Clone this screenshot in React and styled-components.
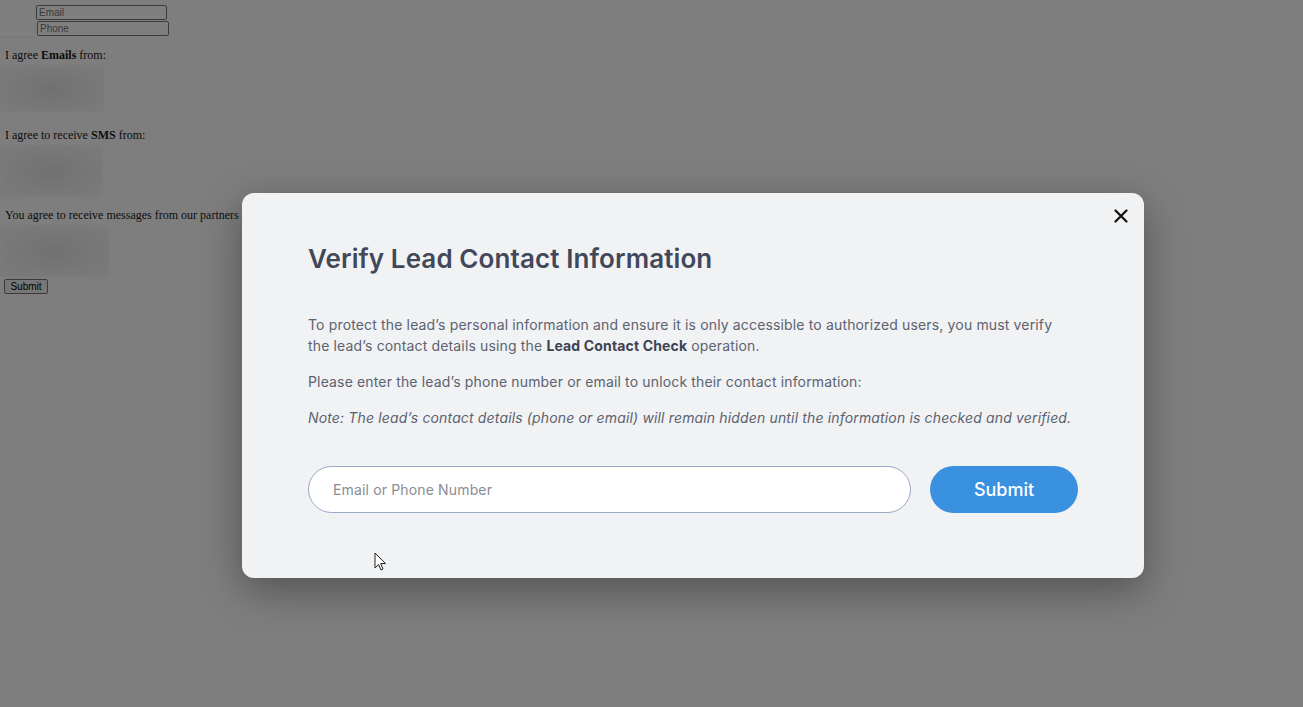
import React from "react";
import styled, { createGlobalStyle } from "styled-components";

const Global = createGlobalStyle`
  html, body { margin: 0; padding: 0; }
  body { background: #fff; font-family: "Liberation Serif", "Times New Roman", serif; }
  * { box-sizing: border-box; }
`;

const Page = styled.div`
  position: relative;
  width: 1303px;
  height: 707px;
  overflow: hidden;
  background: #fcfcfc;
  color: #000;
  font-size: 12px;
`;

const Form = styled.form`
  display: flex;
  flex-direction: column;
  align-items: flex-start;
`;

const TopRow = styled.div`
  display: flex;
  gap: 1px;
`;

const Thumb = styled.div`
  width: 35px;
  height: 37px;
  background: #ffffff;
  border-right: 1px solid #f0f0f0;
  border-bottom: 1px solid #f0f0f0;
`;

const Inputs = styled.div`
  display: flex;
  flex-direction: column;
  gap: 1px;
  padding-top: 5px;
`;

const SmallInput = styled.input`
  width: ${(p) => p.$w}px;
  height: 15px;
  margin-left: ${(p) => p.$ml || 0}px;
  border: 1px solid #767676;
  border-radius: 2px;
  padding: 0 2px;
  font-family: "Liberation Sans", Arial, sans-serif;
  font-size: 10px;
  &::placeholder { color: #757575; }
`;

const Label = styled.p`
  margin: ${(p) => p.$mt}px 0 0 5px;
  line-height: 15px;
  font-size: 12px;
  white-space: nowrap;
  color: #1a1a1a;
`;

const Blur = styled.div`
  width: ${(p) => p.$w}px;
  height: ${(p) => p.$h}px;
  margin-top: ${(p) => p.$mt}px;
  background: radial-gradient(ellipse at 50% 50%, #e2e2e2 0%, #f0f0f0 60%, #f6f6f6 100%);
  filter: blur(1px);
`;

const SmallButton = styled.button`
  margin: 2px 0 0 4px;
  height: 15px;
  width: 44px;
  padding: 0;
  font-family: "Liberation Sans", Arial, sans-serif;
  font-size: 10px;
  border: 1px solid #767676;
  border-radius: 2px;
  background: #efefef;
  color: #000;
`;

const Overlay = styled.div`
  position: absolute;
  inset: 0;
  background: rgba(0, 0, 0, 0.5);
  display: flex;
  align-items: flex-start;
  justify-content: flex-start;
  padding: 193px 0 0 242px;
`;

const Modal = styled.div`
  position: relative;
  width: 902px;
  height: 385px;
  background: #f1f2f4;
  border-radius: 12px;
  box-shadow: 0 12px 40px rgba(0, 0, 0, 0.35);
  padding: 50px 66px 66px 66px;
  font-family: Inter, "Noto Sans", sans-serif;
  display: flex;
  flex-direction: column;
`;

const Close = styled.button`
  position: absolute;
  top: 14px;
  right: 14px;
  width: 18px;
  height: 18px;
  padding: 0;
  border: 0;
  background: transparent;
  display: flex;
  align-items: center;
  justify-content: center;
  cursor: pointer;
`;

const Title = styled.h2`
  margin: 0;
  font-size: 26px;
  line-height: 32px;
  font-weight: 600;
  color: #414859;
  letter-spacing: 0.1px;
`;

const Body = styled.div`
  margin-top: 39px;
  display: flex;
  flex-direction: column;
  gap: 15px;
  color: #5c6270;
  font-size: 14px;
  line-height: 21px;
  letter-spacing: 0.15px;
`;

const Para = styled.p`
  margin: 0;
  max-width: 750px;
  font-style: ${(p) => (p.$italic ? "italic" : "normal")};
  white-space: ${(p) => (p.$nowrap ? "nowrap" : "normal")};
  b { font-weight: 700; color: #3d4352; }
`;

const Row = styled.div`
  margin-top: 38px;
  display: flex;
  gap: 19px;
`;

const Field = styled.input`
  width: 603px;
  height: 47px;
  border: 1px solid #9aa7c5;
  border-radius: 24px;
  background: #fff;
  padding: 0 24px;
  font-family: Inter, "Noto Sans", sans-serif;
  font-size: 14px;
  letter-spacing: 0.15px;
  color: #333;
  outline: none;
  &::placeholder { color: #8a8d94; }
`;

const Submit = styled.button`
  width: 148px;
  height: 47px;
  border: 0;
  border-radius: 24px;
  background: #3a91e0;
  color: #fff;
  font-family: Inter, "Noto Sans", sans-serif;
  font-size: 18px;
  font-weight: 500;
  cursor: pointer;
`;

const Cursor = styled.svg`
  position: absolute;
  left: 132px;
  top: 359px;
`;

export default function App() {
  return (
    <>
      <Global />
      <Page>
        <Form>
          <TopRow>
            <Thumb />
            <Inputs>
              <SmallInput $w={131} placeholder="Email" />
              <SmallInput $w={132} $ml={1} placeholder="Phone" />
            </Inputs>
          </TopRow>
          <Label $mt={11}>
            I agree <b>Emails</b> from:
          </Label>
          <Blur $w={104} $h={46} $mt={3} />
          <Label $mt={16}>
            I agree to receive <b>SMS</b> from:
          </Label>
          <Blur $w={102} $h={51} $mt={3} />
          <Label $mt={11}>You agree to receive messages from our partners l</Label>
          <Blur $w={109} $h={51} $mt={3} />
          <SmallButton type="button">Submit</SmallButton>
        </Form>
        <Overlay>
          <Modal>
            <Close aria-label="Close">
              <svg width="14" height="14" viewBox="0 0 14 14">
                <path d="M1.5 1.5 L12.5 12.5 M12.5 1.5 L1.5 12.5" stroke="#111" strokeWidth="2.2" strokeLinecap="round" />
              </svg>
            </Close>
            <Title>Verify Lead Contact Information</Title>
            <Body>
              <Para>
                To protect the lead’s personal information and ensure it is only accessible to authorized users, you must verify
                the lead’s contact details using the <b>Lead Contact Check</b> operation.
              </Para>
              <Para>Please enter the lead’s phone number or email to unlock their contact information:</Para>
              <Para $italic $nowrap>
                Note: The lead’s contact details (phone or email) will remain hidden until the information is checked and verified.
              </Para>
            </Body>
            <Row>
              <Field placeholder="Email or Phone Number" />
              <Submit type="button">Submit</Submit>
            </Row>
            <Cursor width="14" height="20" viewBox="0 0 14 20">
              <path d="M1 1 L1 16 L4.5 12.5 L7 18 L9 17 L6.6 11.6 L11.5 11.6 Z" fill="#fff" stroke="#222" strokeWidth="1" strokeLinejoin="round" />
            </Cursor>
          </Modal>
        </Overlay>
      </Page>
    </>
  );
}
